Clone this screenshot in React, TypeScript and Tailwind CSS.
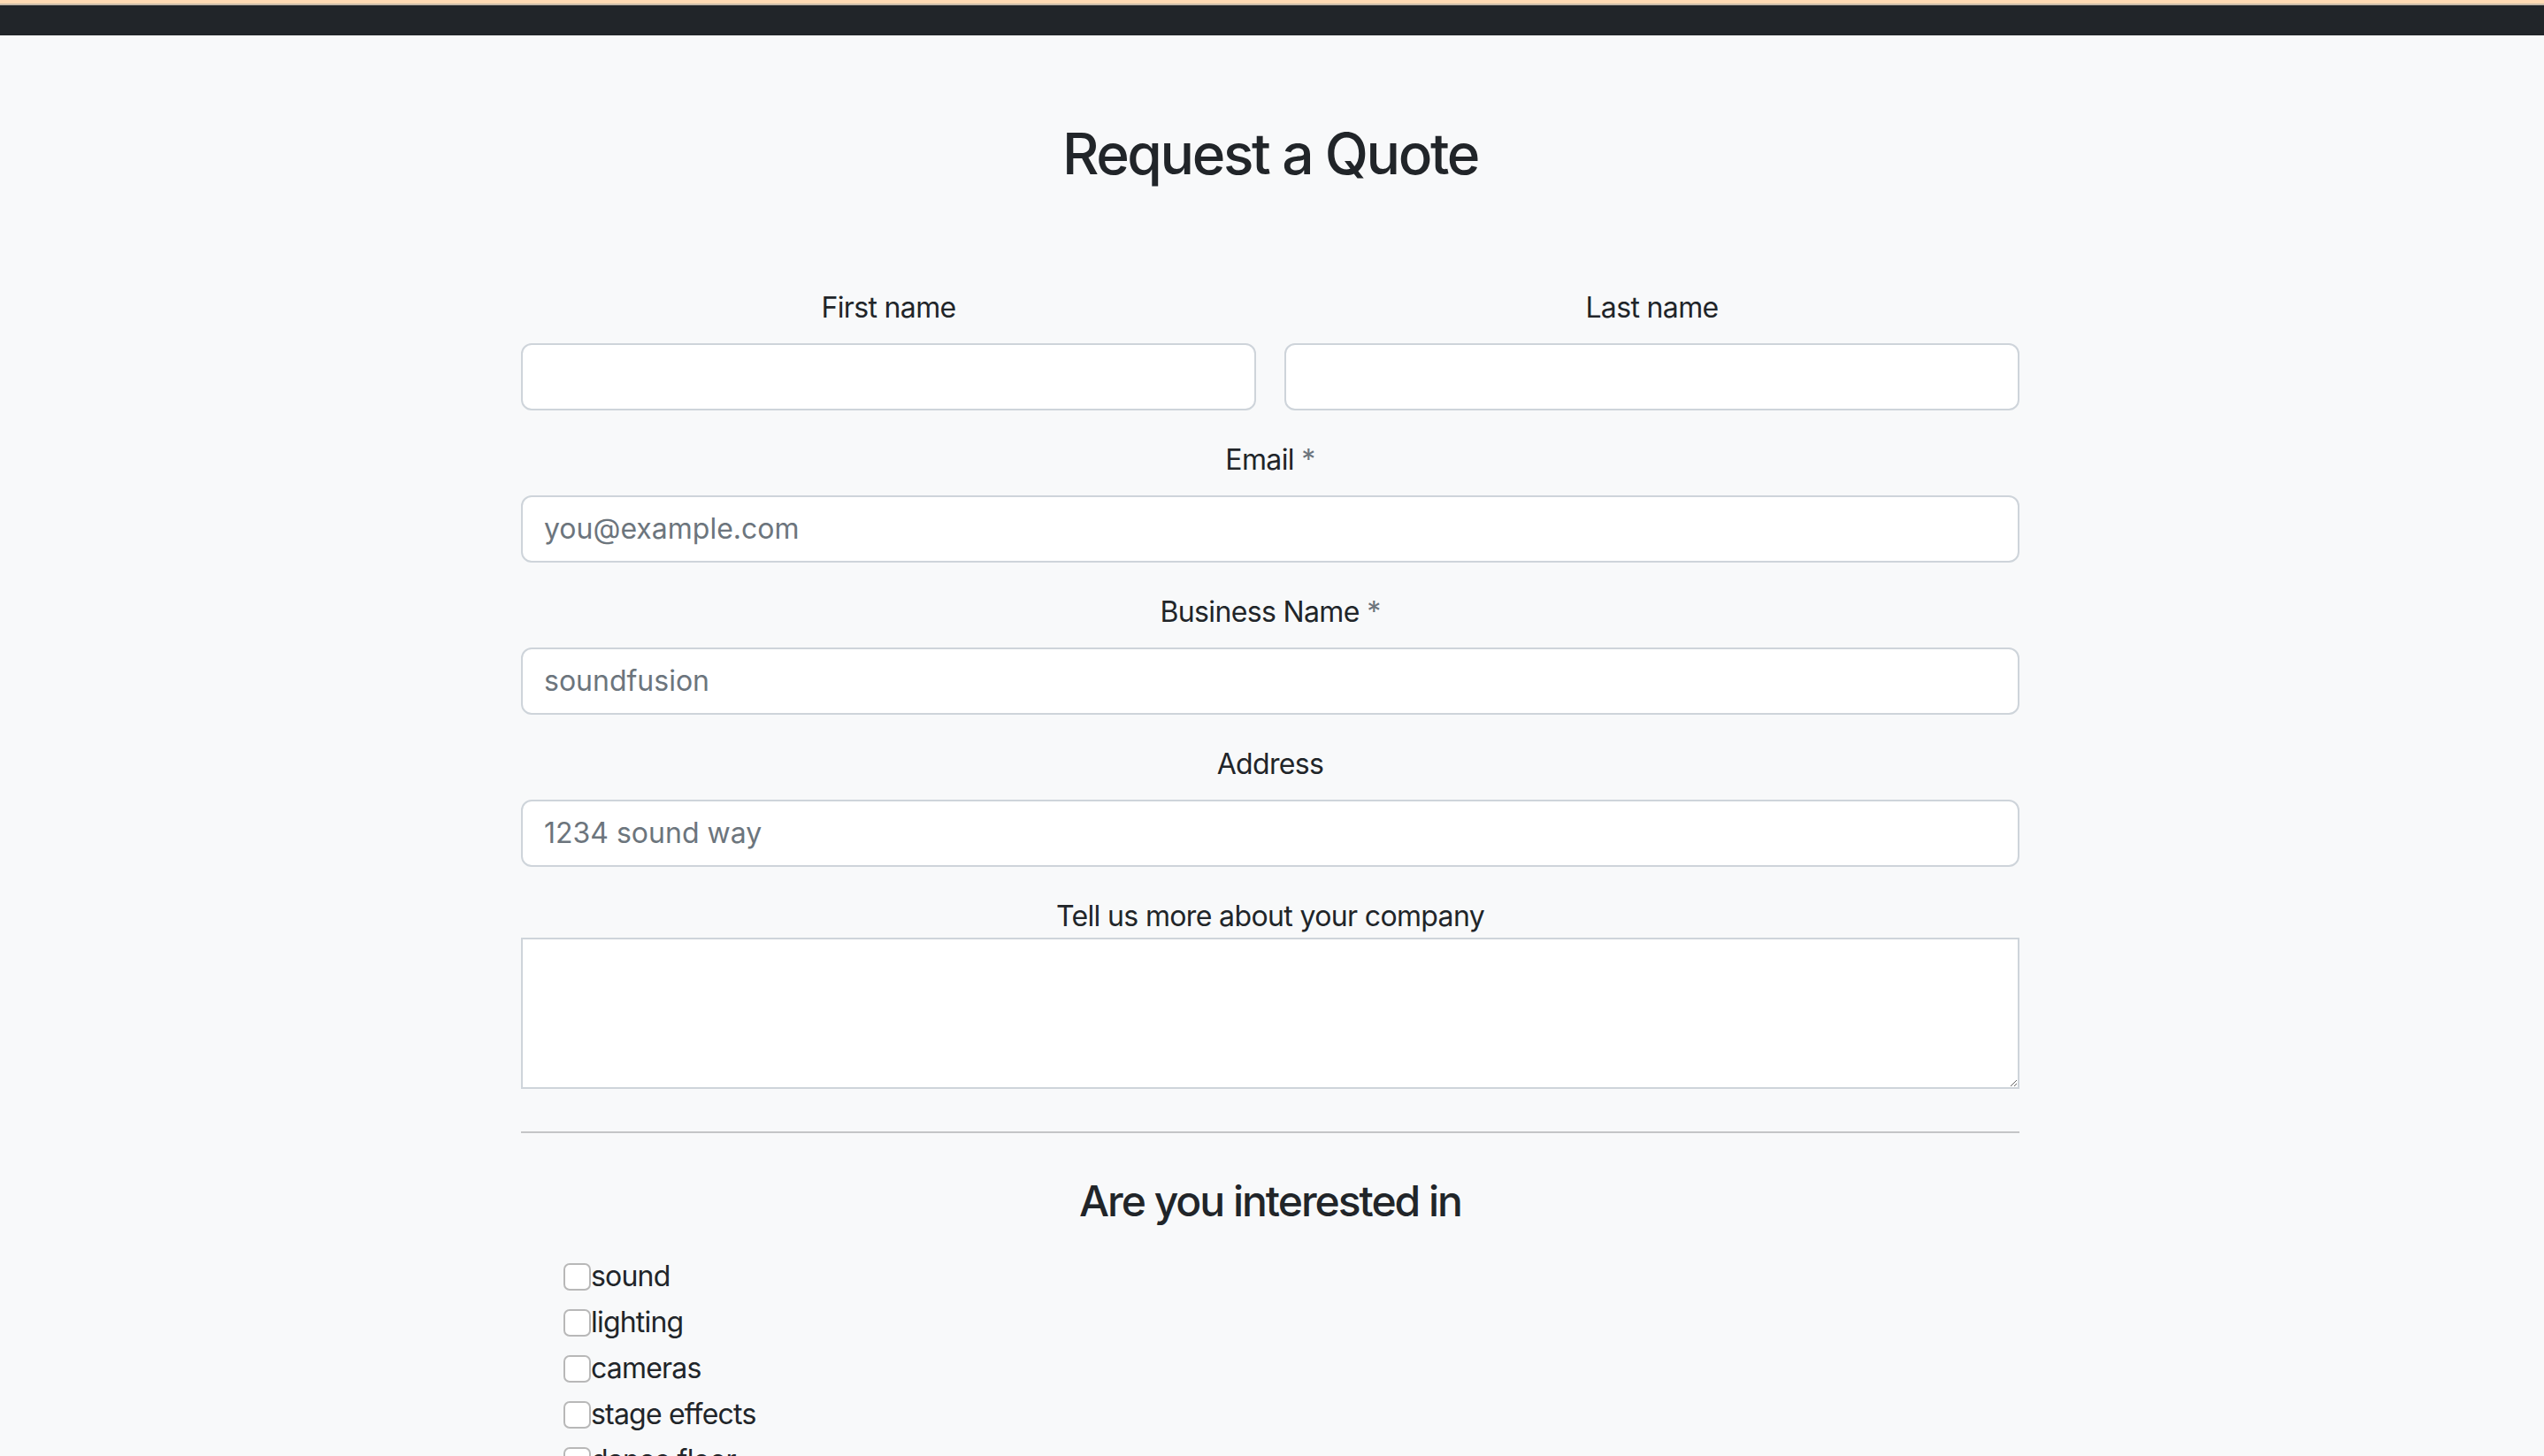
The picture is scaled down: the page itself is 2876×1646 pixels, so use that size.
const App = () => {
  const services = ['sound', 'lighting', 'cameras', 'stage effects', 'dance floor'];

  const inputClass =
    'block w-full h-[76px] px-[24px] text-[32px] bg-white border-2 border-[#ced4da] rounded-[12px] text-[#212529] placeholder:text-[#6c757d] outline-none';
  const labelClass = 'block text-center text-[32px] leading-[48px] mb-[16px] tracking-[-0.02em]';

  return (
    <div className="min-h-screen bg-[#f8f9fa] text-[#212529] font-['Inter',sans-serif]">
      {/* Top bar */}
      <div className="h-[4px] bg-[#ffdab3]" />
      <div className="h-[2px] bg-[#c9bba9]" />
      <div className="h-[34px] bg-[#212529]" />

      <main className="w-[1694px] ml-[589px] pt-[96px]">
        <h1 className="text-center text-[64px] leading-[1.2] font-medium tracking-[-0.037em]">Request a Quote</h1>

        <form className="mt-[111px]">
          <div className="grid grid-cols-2 gap-x-[32px]">
            <div>
              <label className={labelClass}>First name</label>
              <input type="text" className={inputClass} />
            </div>
            <div>
              <label className={labelClass}>Last name</label>
              <input type="text" className={inputClass} />
            </div>
          </div>

          <div className="mt-[32px]">
            <label className={labelClass}>
              Email <span className="text-[#6c757d]">*</span>
            </label>
            <input type="email" placeholder="you@example.com" className={inputClass} />
          </div>

          <div className="mt-[32px]">
            <label className={labelClass}>
              Business Name <span className="text-[#6c757d]">*</span>
            </label>
            <input type="text" placeholder="soundfusion" className={inputClass} />
          </div>

          <div className="mt-[32px]">
            <label className={labelClass}>Address</label>
            <input type="text" placeholder="1234 sound way" className={inputClass} />
          </div>

          <div className="mt-[32px]">
            <label className="block text-center text-[32px] leading-[48px] tracking-[-0.02em]">Tell us more about your company</label>
            <textarea className="block w-full h-[171px] bg-white border-2 border-[#ced4da] text-[32px] outline-none" />
          </div>

          <hr className="mt-[48px] mb-[48px] border-0 h-[2px] bg-[#c4c5c7]" />

          <h4 className="text-center text-[48px] leading-[1.2] font-medium tracking-[-0.042em]">Are you interested in</h4>

          <div className="mt-[31px] pl-[48px]">
            {services.map((service) => (
              <label key={service} className="flex items-center h-[52px] text-[32px] leading-[48px] tracking-[-0.025em]">
                <input
                  type="checkbox"
                  className="appearance-none w-[31px] h-[31px] m-0 bg-white border-2 border-[#b8b8b8] rounded-[7px] shrink-0"
                />
                <span>{service}</span>
              </label>
            ))}
          </div>
        </form>
      </main>
    </div>
  );
};

export default App;
